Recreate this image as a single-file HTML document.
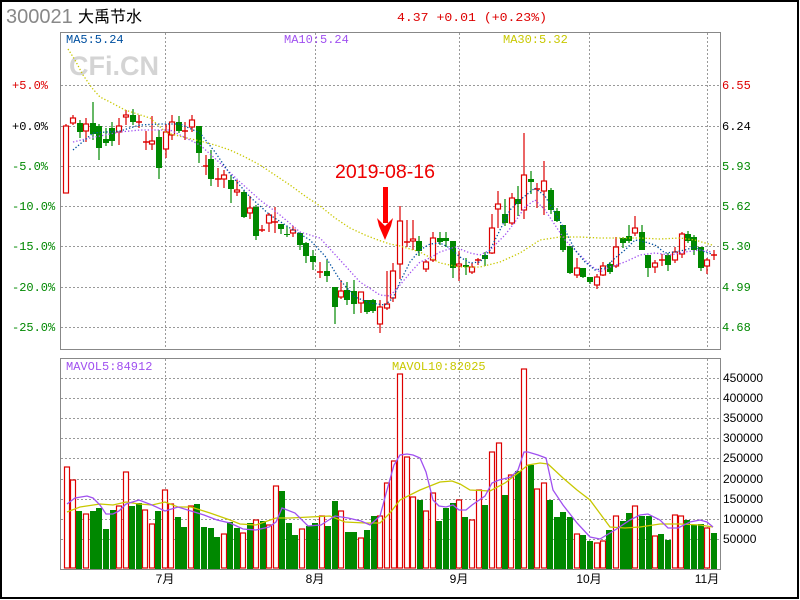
<!DOCTYPE html>
<html><head><meta charset="utf-8"><style>
html,body{margin:0;padding:0;background:#fff;}
svg{display:block;}
.m{font-family:"Liberation Mono",monospace;font-size:12px;}
.s{font-family:"Liberation Sans","Noto Sans CJK SC",sans-serif;}
</style></head><body>
<svg id="c" width="800" height="600" xmlns="http://www.w3.org/2000/svg">
<rect x="0" y="0" width="800" height="600" fill="#fff"/>
<rect x="1" y="1" width="797" height="597" fill="none" stroke="#000" stroke-width="2"/>
<text x="6" y="23" class="s" font-size="20" fill="#888">300021</text>
<text x="78" y="22" class="s" font-size="16" fill="#000">大禹节水</text>
<text x="397" y="21" class="m" font-size="15" fill="#d00" textLength="150" lengthAdjust="spacingAndGlyphs">4.37 +0.01 (+0.23%)</text>
<g id="grid" stroke="#999" stroke-dasharray="2,2" stroke-width="1"></g>
<text x="69" y="75" class="s" font-size="27" font-weight="bold" fill="#d4d4d4">CFi.CN</text>
<text x="66" y="43" class="m" font-size="11" fill="#0050a0">MA5:5.24</text>
<text x="284" y="43" class="m" font-size="11" fill="#a050f0">MA10:5.24</text>
<text x="503" y="43" class="m" font-size="11" fill="#c8c800">MA30:5.32</text>
<text x="66" y="370" class="m" font-size="11" fill="#a050f0">MAVOL5:84912</text>
<text x="392" y="370" class="m" font-size="11" fill="#c8c800">MAVOL10:82025</text>
<g id="lab" class="m" font-size="11"></g>
<g id="vol"></g>
<g id="cnd"></g>
<g id="ma" fill="none"></g>
<rect x="60.5" y="32.5" width="660" height="317" fill="none" stroke="#888"/>
<rect x="60.5" y="358.5" width="660" height="211" fill="none" stroke="#888"/>
<text x="335" y="178" class="s" font-size="19" fill="#e00" textLength="100" lengthAdjust="spacingAndGlyphs">2019-08-16</text>
<rect x="383" y="187" width="5" height="36" fill="#f00"/>
<polygon points="377,218 385,226 393,218 391,226 385,240 379,226" fill="#f00"/>
</svg>
<script>
var NS="http://www.w3.org/2000/svg";
function el(p,t,a){var e=document.createElementNS(NS,t);for(var k in a)e.setAttribute(k,a[k]);document.getElementById(p).appendChild(e);return e;}
var vx=[165,315,459,589,707];
var py=[85,126,166,206,246,287,327];
vx.forEach(function(x){el('grid','line',{x1:x+.5,y1:33,x2:x+.5,y2:350});el('grid','line',{x1:x+.5,y1:359,x2:x+.5,y2:569});});
py.forEach(function(y){el('grid','line',{x1:61,y1:y+.5,x2:720,y2:y+.5});});
for(var i=0;i<9;i++){var y=378+i*20.1;el('grid','line',{x1:61,y1:Math.round(y)+.5,x2:720,y2:Math.round(y)+.5});}
var pl=["+5.0%","+0.0%","-5.0%","-10.0%","-15.0%","-20.0%","-25.0%"];
var pr=["6.55","6.24","5.93","5.62","5.30","4.99","4.68"];
pl.forEach(function(t,i){var c=i==0?"#d00":i==1?"#000":"#080";var e=el('lab','text',{x:12,y:py[i]+4,fill:c});e.textContent=t;
 var e2=el('lab','text',{x:722,y:py[i]+4,fill:c});e2.textContent=pr[i];});
for(var i=0;i<9;i++){var e=el('lab','text',{x:723,y:Math.round(378+i*20.1)+4,fill:"#000","font-family":"Liberation Sans,sans-serif","font-size":"12"});e.textContent=(450000-i*50000)+"";}
var ml=["7月","8月","9月","10月","11月"];
ml.forEach(function(t,i){var e=el('lab','text',{x:vx[i],y:583,fill:"#000","text-anchor":"middle","font-family":"Liberation Sans,Noto Sans CJK SC,sans-serif","font-size":"12"});e.textContent=t;});
var C=[[66,126,193,124,193,'r'],[73,118,123,115,125,'r'],[80,123,132,120,138,'g'],[86,124,131,118,142,'r'],[93,123,134,102,140,'g'],[99,126,148,124,160,'g'],[106,139,143,128,146,'g'],[112,128,141,122,146,'g'],[119,126,132,118,145,'r'],[126,115,117,110,125,'r'],[133,115,122,109,125,'g'],[139,122,123,115,128,'x'],[146,142,143,131,150,'x'],[152,141,144,116,150,'r'],[159,137,168,130,179,'g'],[166,132,149,124,158,'r'],[172,122,135,115,140,'r'],[179,122,131,116,133,'g'],[185,131,132,122,140,'x'],[192,120,127,115,132,'r'],[199,126,153,126,163,'g'],[206,166,167,155,175,'x'],[211,159,179,150,186,'g'],[218,179,180,168,187,'x'],[224,175,179,170,188,'r'],[231,180,189,175,203,'g'],[237,190,192,180,196,'r'],[244,192,217,190,218,'g'],[250,208,213,196,219,'r'],[256,207,236,205,240,'g'],[262,230,231,225,232,'x'],[269,215,223,213,232,'r'],[275,222,223,207,233,'x'],[281,224,229,224,234,'g'],[287,234,235,226,237,'g'],[293,230,233,226,237,'r'],[300,233,245,232,250,'g'],[306,243,256,242,263,'g'],[313,256,262,250,270,'g'],
[320,272,273,262,278,'x'],[327,271,276,260,282,'g'],[335,287,307,287,324,'g'],[341,291,297,280,299,'r'],[347,290,300,282,305,'g'],[354,291,304,280,314,'g'],[361,292,303,292,313,'r'],[367,300,312,300,314,'g'],[373,300,311,299,313,'g'],[380,307,324,300,333,'r'],[387,304,308,271,310,'r'],[393,271,298,263,302,'r'],[400,221,264,206,279,'r'],[407,242,243,220,247,'x'],[413,239,241,220,250,'r'],[419,241,251,236,256,'g'],[426,262,269,260,272,'r'],[433,238,260,232,262,'r'],[440,238,242,232,245,'g'],[446,238,241,232,247,'g'],[453,241,268,241,278,'g'],[459,264,266,251,281,'r'],[466,265,267,258,275,'g'],[472,267,272,263,274,'r'],[478,260,261,258,265,'x'],[485,255,259,252,266,'g'],[492,228,253,214,254,'r'],[498,204,209,191,228,'r'],[505,214,223,199,226,'g'],[512,198,223,193,225,'r'],[518,199,204,186,216,'g'],[524,175,210,133,219,'r'],[531,179,182,171,194,'g'],[537,189,190,183,208,'x'],[544,181,191,161,215,'r'],[551,190,210,188,214,'g'],[557,211,221,208,222,'g'],[563,225,250,225,252,'g'],[570,246,273,246,274,'g'],[577,268,275,258,278,'r'],[583,268,277,268,278,'g'],[590,277,282,277,284,'g'],[597,277,285,274,289,'r'],[603,266,275,262,276,'r'],[610,264,272,262,274,'g'],[616,247,266,237,268,'r'],[623,238,243,237,248,'g'],[629,236,241,225,243,'g'],[635,228,233,216,236,'r'],[642,232,250,225,250,'g'],[648,255,268,255,277,'g'],[655,263,267,260,273,'r'],[662,260,261,254,266,'x'],[668,255,265,253,271,'g'],[675,252,260,247,263,'r'],[682,234,254,232,258,'r'],[688,234,241,231,243,'g'],[694,237,250,235,255,'g'],[701,247,268,247,271,'g'],[707,260,266,258,274,'r'],[714,255,256,250,260,'x']];
C.forEach(function(c){var x=c[0],t=c[1],b=c[2],h=c[3],l=c[4],k=c[5];
 var col=k=='g'?'#080':'#d00';
 if(k=='g'){el('cnd','line',{x1:x,y1:h,x2:x,y2:l,stroke:col,"stroke-width":1.2});el('cnd','rect',{x:x-3,y:t,width:6,height:Math.max(1,b-t),fill:col});}
 else if(k=='r'){el('cnd','line',{x1:x,y1:h,x2:x,y2:t,stroke:col,"stroke-width":1.2});el('cnd','line',{x1:x,y1:b,x2:x,y2:l,stroke:col,"stroke-width":1.2});el('cnd','rect',{x:x-2.5,y:t,width:5,height:Math.max(1,b-t),fill:"#fff",stroke:col,"stroke-width":1.2});}
 else {el('cnd','line',{x1:x,y1:h,x2:x,y2:l,stroke:col,"stroke-width":1.2});el('cnd','line',{x1:x-3,y1:t,x2:x+3,y2:t,stroke:col,"stroke-width":1.5});}
});
var V=[[67,467,'r'],[73,480,'r'],[79,511,'g'],[86,514,'r'],[93,511,'g'],[99,508,'g'],[106,529,'g'],[113,510,'g'],[119,506,'r'],[126,472,'r'],[132,506,'g'],[139,503,'g'],[145,510,'r'],[152,524,'r'],[158,511,'g'],[165,490,'r'],[171,504,'r'],[178,517,'g'],[184,527,'g'],[191,506,'r'],[197,504,'g'],[204,527,'g'],[211,528,'g'],[217,537,'g'],[224,534,'r'],[230,522,'g'],[237,528,'g'],[243,533,'r'],[250,523,'g'],[256,520,'r'],[263,521,'g'],[269,525,'r'],[276,486,'r'],[282,491,'g'],[289,523,'g'],[295,535,'g'],[302,529,'r'],[309,526,'g'],[315,523,'g'],[322,516,'r'],[328,526,'g'],[335,501,'g'],[341,511,'r'],[348,532,'g'],[354,532,'g'],[361,538,'r'],[367,530,'g'],[374,516,'g'],[380,516,'r'],[387,483,'r'],[394,461,'r'],[400,374,'r'],[407,457,'r'],[413,497,'r'],[420,500,'g'],[426,511,'r'],[433,493,'r'],[439,521,'g'],[446,508,'g'],[453,503,'g'],[459,500,'r'],[465,517,'g'],[472,520,'r'],[479,490,'r'],[485,505,'g'],[492,452,'r'],[499,443,'r'],[505,495,'g'],[511,475,'r'],[518,471,'g'],[524,369,'r'],[531,465,'g'],[537,489,'r'],[544,483,'r'],[550,500,'g'],[557,517,'g'],[563,512,'g'],[570,517,'g'],[577,534,'r'],[583,535,'g'],[590,541,'g'],[597,543,'r'],[603,541,'r'],[609,530,'g'],[616,516,'r'],[623,521,'g'],[629,513,'g'],[635,506,'r'],[642,516,'g'],[649,516,'g'],[655,536,'r'],[661,534,'g'],[668,540,'g'],[675,515,'r'],[681,516,'r'],[687,520,'g'],[694,525,'g'],[701,524,'g'],[707,528,'r'],[714,533,'g']];
V.forEach(function(v){var x=v[0],t=v[1];
 if(v[2]=='g')el('vol','rect',{x:x-3,y:t,width:6,height:569-t,fill:'#080'});
 else el('vol','rect',{x:x-2.5,y:t,width:5,height:568-t,fill:'#fff',stroke:'#d00',"stroke-width":1.2});});
function pts(a){return a.map(function(p){return p[0]+','+p[1];}).join(' ');}
function line(a,col,dash){var o={points:pts(a),stroke:col,"stroke-width":1.3,fill:"none"};if(dash)o["stroke-dasharray"]="1.3,2";el('ma','polyline',o);}
line([[68,49],[75,60],[83,75],[92,88],[100,97],[110,102],[125,110],[150,118],[167,133],[187,138],[200,141],[215,145],[230,150],[245,157],[260,165],[275,175],[290,185],[305,196],[320,206],[335,218],[350,228],[365,235],[378,240],[390,244],[400,246],[420,252],[440,263],[460,267],[480,267],[500,262],[520,253],[540,240],[560,237],[580,237],[600,238],[620,238],[640,238],[660,239],[680,238],[695,240],[712,245]],'#c8c800',true);
line([[73,142],[90,138],[120,132],[140,130],[170,130],[200,145],[220,163],[240,182],[260,200],[280,215],[300,232],[320,238],[340,260],[360,282],[380,295],[390,296],[400,285],[410,273],[420,262],[430,258],[440,252],[455,247],[470,253],[480,255],[490,250],[505,235],[515,222],[525,207],[535,200],[545,210],[555,225],[565,240],[580,255],[590,265],[600,272],[610,267],[625,262],[640,255],[655,253],[670,255],[685,252],[700,250],[712,252]],'#a050f0',true);
line([[73,150],[93,133],[120,131],[140,125],[160,124],[180,124],[200,133],[215,152],[230,174],[250,197],[270,215],[290,228],[310,240],[325,256],[340,280],[355,297],[370,303],[385,305],[393,298],[400,282],[410,262],[420,250],[430,244],[440,243],[450,248],[460,257],[470,263],[480,262],[490,250],[500,230],[510,210],[520,200],[535,188],[545,196],[555,213],[565,230],[575,250],[585,262],[595,270],[605,268],[615,258],[625,250],[635,240],[645,242],[655,245],[665,253],[675,252],[685,250],[695,247],[705,252],[712,254]],'#0050a0',true);
line([[67,512],[80,507],[100,504],[113,505],[126,502],[139,504],[152,505],[165,502],[178,507],[191,507],[210,513],[230,520],[240,524],[256,525],[276,518],[290,518],[310,517],[330,516],[345,522],[365,523],[380,523],[390,513],[400,500],[420,490],[440,482],[452,481],[460,484],[470,490],[490,491],[505,483],[518,473],[528,465],[540,463],[548,464],[563,478],[577,490],[590,500],[610,527],[625,528],[640,527],[660,524],[680,524],[700,525],[713,527]],'#c8c800',false);
line([[67,504],[75,498],[87,496],[93,498],[100,505],[106,514],[113,514],[119,511],[126,504],[139,500],[152,505],[165,511],[178,507],[191,511],[204,515],[217,520],[230,523],[243,529],[256,530],[269,527],[276,522],[282,508],[295,513],[308,526],[321,525],[335,516],[348,518],[361,521],[370,525],[380,516],[387,490],[394,465],[400,455],[407,454],[413,455],[420,458],[426,472],[433,500],[439,506],[446,507],[453,505],[459,510],[466,510],[472,505],[485,496],[492,483],[499,480],[511,477],[518,470],[524,452],[528,452],[538,455],[546,458],[553,490],[563,505],[577,523],[590,537],[600,539],[615,530],[630,520],[640,515],[648,514],[660,520],[668,528],[678,528],[690,522],[700,520],[707,522],[713,527]],'#a050f0',false);
</script>
</body></html>
